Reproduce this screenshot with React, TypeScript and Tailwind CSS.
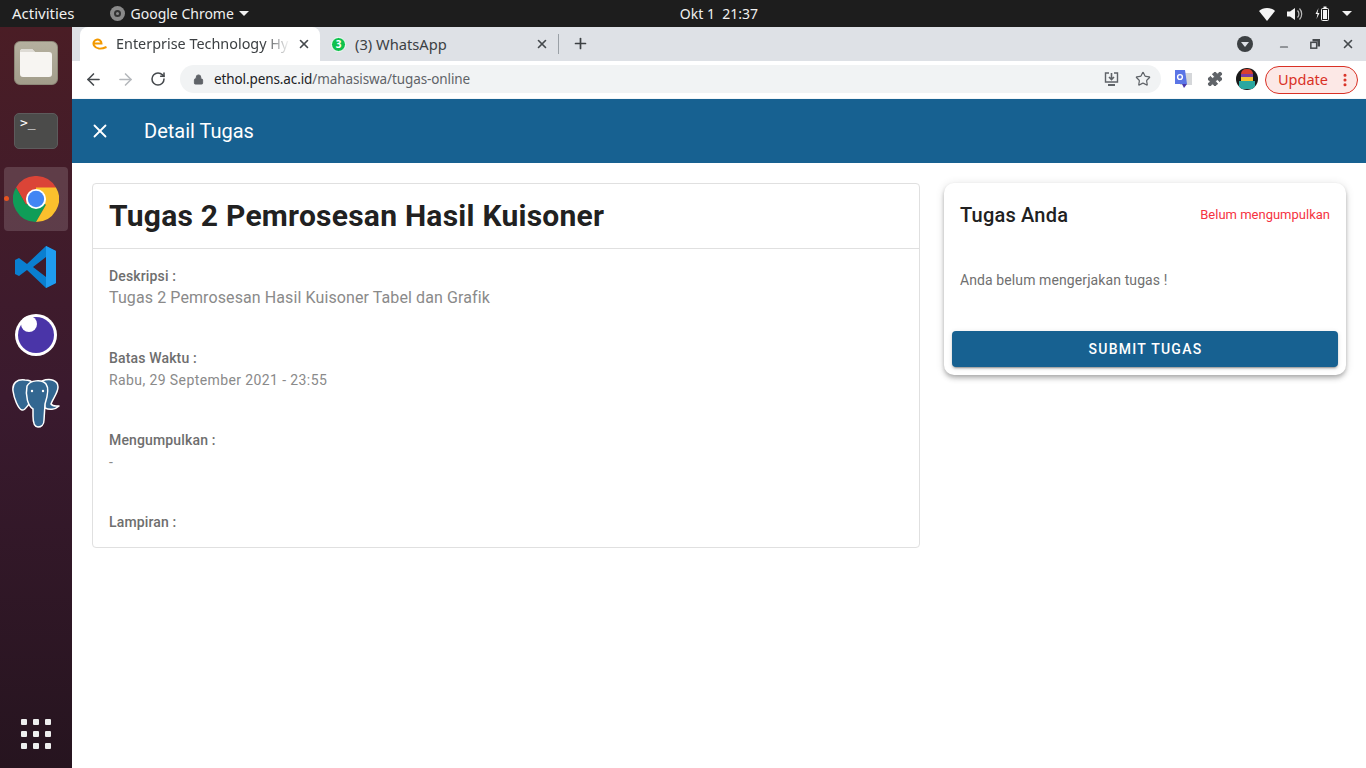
import { ArrowLeft, ArrowRight, RotateCw, Lock, Star, X, Plus, Minus, Puzzle, MoreVertical } from "lucide-react";

const ROBOTO = "font-['Roboto',sans-serif]";
const UI = "font-['Noto_Sans',sans-serif]";

function FilesIcon() {
  return (
    <div className="w-[44px] h-[44px] rounded-[6px] bg-gradient-to-b from-[#b5b09f] to-[#a29d8b] border border-[#8d8878] flex items-center justify-center">
      <svg width="34" height="30" viewBox="0 0 34 30">
        <path d="M1 4a3 3 0 0 1 3-3h9l3 3h14a3 3 0 0 1 3 3v19a3 3 0 0 1-3 3H4a3 3 0 0 1-3-3z" fill="#f7f5f2" />
        <path d="M1 4a3 3 0 0 1 3-3h9l3 3H1z" fill="#dedbd5" />
      </svg>
    </div>
  );
}

function TerminalIcon() {
  return (
    <div className="w-[44px] h-[36px] rounded-[5px] bg-[#4b4b4a] border border-[#5d5b5c] relative">
      <span className="absolute left-[5px] top-[2px] text-[13px] leading-[14px] text-white font-['DejaVu_Sans_Mono',monospace]">&gt;_</span>
    </div>
  );
}

function ChromeIcon({ size }: { size: number }) {
  return (
    <svg width={size} height={size} viewBox="0 0 48 48">
      <path d="M24 24 L44.8 12 A24 24 0 0 0 3.2 12 L3.2 12 L13.6 30 Z" fill="#db4437" />
      <path d="M24 24 L13.6 30 L3.2 12 A24 24 0 0 0 24 48 L34.4 30 Z" fill="#0f9d58" />
      <path d="M24 24 L24 12 L44.8 12 A24 24 0 0 1 24 48 L34.4 30 Z" fill="#fbc02d" />
      <circle cx="24" cy="24" r="10.5" fill="#fff" />
      <circle cx="24" cy="24" r="8.5" fill="#4285f4" />
    </svg>
  );
}

function VsCodeIcon() {
  return (
    <svg width="44" height="44" viewBox="0 0 44 44">
      <path d="M32 1 L13 19 L5 13 L1 15 V29 L5 31 L13 25 L32 43 L42 38 V6 Z M32 12 V32 L19 22 Z" fill="#0a7fd0" fillRule="evenodd" />
      <path d="M32 1 L42 6 V38 L32 43 Z" fill="#1f9cf0" />
    </svg>
  );
}

function InkscapeIcon() {
  return (
    <svg width="42" height="42" viewBox="0 0 42 42">
      <circle cx="21" cy="21" r="21" fill="#fff" />
      <circle cx="21" cy="21" r="18" fill="#4a35a8" />
      <circle cx="14" cy="10" r="8" fill="#fff" />
    </svg>
  );
}

function PostgresIcon() {
  return (
    <svg width="48" height="50" viewBox="0 0 48 50">
      <g fill="#336791" stroke="#fff" strokeWidth="1.5" strokeLinejoin="round">
        <path d="M30 3 C38 0 46 2 46 9 C46 15 41 20 39 26 C41 29 44 28 47 28 C43 32 37 32 33 30 Z" />
        <path d="M13 2 C5 1 0 5 1 13 C2 20 6 31 10 32 C13 33 15 28 18 25 L22 6 C20 3 17 2 13 2 Z" />
        <path d="M15 8 C18 2 30 1 34 6 C37 10 35 20 33 26 L32 42 C32 47 29 49 26 49 C23 49 21 45 21 38 L21 31 C16 28 13 18 15 8 Z" />
      </g>
      <circle cx="20" cy="13" r="1.2" fill="#fff" />
      <circle cx="31" cy="13" r="1.2" fill="#fff" />
    </svg>
  );
}

function DockItem({ active, children }: { active?: boolean; children: React.ReactNode }) {
  return (
    <div className={`w-[64px] h-[64px] mx-[4px] rounded-[4px] flex items-center justify-center relative ${active ? "bg-white/15" : ""}`}>
      {active && <span className="absolute left-0 top-[29px] w-[5px] h-[5px] rounded-full bg-[#e95420]" />}
      {children}
    </div>
  );
}

function TopBar() {
  return (
    <div className={`${UI} h-[27px] bg-[#1d1d1d] text-[#f0f0f0] text-[14px] flex items-center shrink-0`}>
      <span className="ml-[12px] text-[15px]">Activities</span>
      <span className="ml-[35px] w-[15px] h-[15px] rounded-full bg-[#8a8a8a] flex items-center justify-center">
        <span className="w-[7px] h-[7px] rounded-full border-2 border-[#333]" />
      </span>
      <span className="ml-[6px]">Google Chrome</span>
      <span className="ml-[5px] w-0 h-0 border-x-[5px] border-x-transparent border-t-[5px] border-t-[#f0f0f0]" />
      <div className="flex-1 flex justify-center pr-[70px]">
        <span>Okt 1&nbsp;&nbsp;21:37</span>
      </div>
      <div className="flex items-center mr-[14px]">
        <svg width="16" height="14" viewBox="0 0 16 14" className="mr-[12px]">
          <path d="M0 4 C4 0 12 0 16 4 L8 14 Z" fill="#f5f5f5" />
        </svg>
        <svg width="16" height="14" viewBox="0 0 16 14" className="mr-[12px]">
          <path d="M0 4.5 H3 L8 1 V13 L3 9.5 H0 Z" fill="#f5f5f5" />
          <path d="M10.5 3.5 A5 5 0 0 1 10.5 10.5 M12.5 1.5 A8 8 0 0 1 12.5 12.5" stroke="#bbb" fill="none" strokeWidth="1.2" />
        </svg>
        <svg width="15" height="16" viewBox="0 0 15 16" className="mr-[12px]">
          <path d="M3.5 2 L0.5 8 H2.5 L1.5 13 L4.5 7 H2.5 Z" fill="#f5f5f5" />
          <rect x="6.5" y="2.5" width="7" height="12" rx="1" fill="none" stroke="#f5f5f5" />
          <rect x="8" y="4" width="4" height="9" fill="#f5f5f5" />
          <rect x="8.5" y="0.5" width="3" height="2" fill="#f5f5f5" />
        </svg>
        <span className="w-0 h-0 border-x-[5px] border-x-transparent border-t-[5px] border-t-[#f0f0f0]" />
      </div>
    </div>
  );
}

function Dock() {
  return (
    <div className="w-[72px] shrink-0 bg-gradient-to-b from-[#4a1d25] via-[#3a1a2e] to-[#26141f] flex flex-col gap-[4px] pt-[4px] pb-[2px]">
      <DockItem><FilesIcon /></DockItem>
      <DockItem><TerminalIcon /></DockItem>
      <DockItem active><ChromeIcon size={46} /></DockItem>
      <DockItem><VsCodeIcon /></DockItem>
      <DockItem><InkscapeIcon /></DockItem>
      <DockItem><PostgresIcon /></DockItem>
      <div className="mt-auto">
        <DockItem>
          <div className="grid grid-cols-3 gap-[6px]">
            {Array.from({ length: 9 }).map((_, i) => (
              <span key={i} className="w-[6px] h-[6px] rounded-[1px] bg-[#eeeeee]" />
            ))}
          </div>
        </DockItem>
      </div>
    </div>
  );
}

function BrowserChrome() {
  return (
    <div className={`${UI} shrink-0`}>
      {/* Tabs */}
      <div className="h-[34px] bg-[#dee1e6] flex items-end pl-[8px]">
        <div className="w-[240px] h-[34px] bg-white rounded-t-[8px] flex items-center pl-[12px] pr-[9px]">
          <svg width="15" height="12" viewBox="0 0 15 12" className="mr-[9px] shrink-0">
            <path d="M1.5 5.5 H9.5 A4 4 0 1 0 2 7.5 C4 11 9 11.5 14.5 9" fill="none" stroke="#f29900" strokeWidth="2" />
          </svg>
          <span className="flex-1 whitespace-nowrap text-[14.4px] text-[#3c4043] [mask-image:linear-gradient(to_right,black_85%,transparent)]">Enterprise Technology Hy</span>
          <X size={14} strokeWidth={2.8} className="text-[#45494d] ml-[7px]" />
        </div>
        <div className="w-[238px] h-[34px] flex items-center pl-[11px] pr-[9px]">
          <span className="relative w-[15px] h-[15px] rounded-full bg-[#0fc14e] border border-white text-white text-[10px] font-bold flex items-center justify-center">3</span>
          <span className="ml-[9px] flex-1 text-[14.7px] text-[#3c4043] whitespace-nowrap">(3) WhatsApp</span>
          <X size={14} strokeWidth={2.8} className="text-[#45494d]" />
        </div>
        <div className="w-px h-[20px] bg-[#9aa0a6] mb-[7px]" />
        <Plus size={17} strokeWidth={2.4} className="text-[#3c4043] ml-[13px] mb-[9px]" />
        <div className="ml-auto flex items-center h-[34px] pr-[11px] text-[#45494d]">
          <span className="w-[16px] h-[16px] rounded-full bg-[#3c4043] flex items-center justify-center mr-[25px]">
            <span className="w-0 h-0 border-x-[4px] border-x-transparent border-t-[5px] border-t-[#dee1e6] mt-[1px]" />
          </span>
          <Minus size={12} strokeWidth={2.4} className="mr-[20px] mt-[6px]" />
          <svg width="10" height="10" viewBox="0 0 12 12" className="mr-[21px]">
            <path d="M3 0h9v9H9V3H3z" fill="#45494d" />
            <rect x="1" y="4" width="7" height="7" fill="none" stroke="#45494d" strokeWidth="1.8" />
          </svg>
          <X size={14} strokeWidth={2.8} />
        </div>
      </div>
      {/* Toolbar */}
      <div className="h-[37px] bg-white flex items-center pb-[1px] text-[#5f6368]">
        <ArrowLeft size={19} strokeWidth={2} className="ml-[12px] text-[#45494d]" />
        <ArrowRight size={19} strokeWidth={2} className="ml-[13px] text-[#b5b8bc]" />
        <RotateCw size={16} strokeWidth={2.3} className="ml-[15px] text-[#45494d]" />
        <div className="ml-[14px] w-[981px] h-[28px] bg-[#f1f3f4] rounded-full flex items-center pl-[13px] pr-[10px]">
          <Lock size={11} fill="#5f6368" className="mr-[10px]" />
          <span className="text-[13.5px] tracking-[-0.1px] text-[#202124] whitespace-nowrap">ethol.pens.ac.id<span className="text-[#5f6368]">/mahasiswa/tugas-online</span></span>
          <svg width="15" height="15" viewBox="0 0 15 15" className="ml-auto mr-[16px]">
            <path d="M5 1H1.5v9h12V1H10" fill="none" stroke="#5f6368" strokeWidth="1.4" />
            <path d="M7.5 1v6M5 5l2.5 2.5L10 5" fill="none" stroke="#5f6368" strokeWidth="1.6" />
            <rect x="4" y="12" width="7" height="2" fill="#5f6368" />
          </svg>
          <Star size={16} strokeWidth={1.8} />
        </div>
        <svg width="18" height="20" viewBox="0 0 18 20" className="ml-[13px]">
          <rect x="6" y="4" width="12" height="12" fill="#d5d7da" />
          <path d="M1 1h10l2 14H1z" fill="#5b75e6" />
          <path d="M8 15l2 4 3-4z" fill="#4a37a8" />
          <circle cx="6" cy="8" r="2.4" fill="none" stroke="#fff" strokeWidth="1.4" />
        </svg>
        <Puzzle size={16} fill="#5f6368" strokeWidth={1.5} className="ml-[15px]" />
        <div className="ml-[13px] w-[22px] h-[22px] rounded-full bg-[#1a1a1a] overflow-hidden flex flex-col items-center">
          <span className="w-[12px] h-[5px] bg-[#d8402f] rounded-t-full mt-[1px]" />
          <span className="w-[12px] h-[3px] bg-[#7a3fa0]" />
          <span className="w-[12px] h-[4px] bg-[#f2c230]" />
          <span className="w-[16px] h-[8px] bg-[#2aa7a0]" />
        </div>
        <div className="ml-[7px] mt-[1px] w-[93px] h-[28px] rounded-full border border-[#d93025] bg-[#fce8e6] flex items-center pl-[12px] pr-[4px]">
          <span className="text-[14.5px] text-[#d93025]">Update</span>
          <MoreVertical size={16} strokeWidth={2.6} className="ml-auto text-[#d93025]" />
        </div>
      </div>
    </div>
  );
}

function Field({ label, children, tall }: { label: string; children?: React.ReactNode; tall?: boolean }) {
  return (
    <div className={tall ? "h-[82px]" : ""}>
      <div className="text-[14px] leading-[20px] font-medium tracking-[0.15px] text-[#6e6e6e]">{label}</div>
      {children}
    </div>
  );
}

function Page() {
  return (
    <div className={`${ROBOTO} flex-1 bg-white border-t border-[#f4f6f8]`}>
      <div className="h-[64px] bg-[#176191] flex items-center text-white">
        <X size={22} strokeWidth={2} className="ml-[17px]" />
        <span className="ml-[33px] text-[20px] leading-[24px]">Detail Tugas</span>
      </div>
      <div className="flex items-start gap-[24px] pl-[20px] pr-[20px] pt-[20px]">
        <div className="w-[828px] h-[365px] border border-[#e0e0e0] rounded-[4px] bg-white overflow-hidden">
          <div className="h-[65px] border-b border-[#e0e0e0] flex items-center px-[16px]">
            <h1 className="text-[30px] leading-[36px] font-bold tracking-[0.25px] text-[#212121]">Tugas 2 Pemrosesan Hasil Kuisoner</h1>
          </div>
          <div className="px-[16px] pt-[17px]">
            <Field label="Deskripsi :" tall>
              <div className="text-[16px] leading-[24px] tracking-[0.1px] text-[#8a8a8a]">Tugas 2 Pemrosesan Hasil Kuisoner Tabel dan Grafik</div>
            </Field>
            <Field label="Batas Waktu :" tall>
              <div className="text-[14px] leading-[24px] tracking-[0.4px] text-[#8a8a8a]">Rabu, 29 September 2021 - 23:55</div>
            </Field>
            <Field label="Mengumpulkan :" tall>
              <div className="text-[14px] leading-[24px] text-[#8a8a8a]">-</div>
            </Field>
            <Field label="Lampiran :" />
          </div>
        </div>
        <div className="w-[402px] h-[192px] rounded-[10px] bg-white shadow-[0_2px_4px_-1px_rgba(0,0,0,0.2),0_4px_5px_0_rgba(0,0,0,0.14),0_1px_10px_0_rgba(0,0,0,0.12)] px-[8px] pt-[16px]">
          <div className="flex items-center justify-between px-[8px] h-[32px]">
            <span className="text-[20px] font-medium tracking-[0.2px] text-[#212121] leading-[32px]">Tugas Anda</span>
            <span className="text-[13px] leading-[34px] text-[#f5333f]">Belum mengumpulkan</span>
          </div>
          <div className="px-[8px] mt-[41px] h-[59px] text-[14px] leading-[16px] tracking-[0.1px] text-[#707070]">Anda belum mengerjakan tugas !</div>
          <button className={`w-full h-[36px] rounded-[4px] bg-[#176191] text-white text-[14px] font-medium tracking-[1.25px] pl-[1px] shadow-[0_3px_1px_-2px_rgba(0,0,0,0.2),0_2px_2px_0_rgba(0,0,0,0.14),0_1px_5px_0_rgba(0,0,0,0.12)]`}>
            SUBMIT TUGAS
          </button>
        </div>
      </div>
    </div>
  );
}

export default function App() {
  return (
    <div className="w-[1366px] h-[768px] overflow-hidden flex flex-col bg-white">
      <TopBar />
      <div className="flex flex-1 min-h-0">
        <Dock />
        <div className="flex-1 flex flex-col min-w-0">
          <BrowserChrome />
          <Page />
        </div>
      </div>
    </div>
  );
}
